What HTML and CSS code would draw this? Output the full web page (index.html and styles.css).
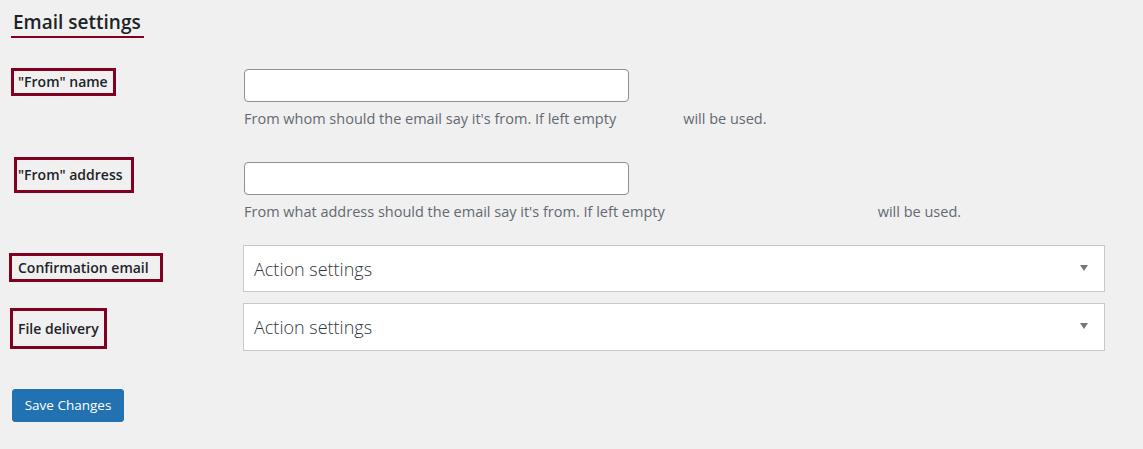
FILE: index.html
```html
<!DOCTYPE html>
<html lang="en">
<head>
<meta charset="utf-8">
<title>Email settings</title>
<link rel="stylesheet" href="styles.css">
</head>
<body>
<div class="wrap">
  <h2 class="title">Email settings</h2>

  <div class="row row-1">
    <div class="label-cell"><label class="mark mark-name" for="from-name">"From" name</label></div>
    <div class="field-cell">
      <input class="text-input input-1" id="from-name" type="text">
      <p class="description">From whom should the email say it's from. If left empty<span class="blank blank-1"></span>will be used.</p>
    </div>
  </div>

  <div class="row row-2">
    <div class="label-cell"><label class="mark mark-address" for="from-address">"From" address</label></div>
    <div class="field-cell">
      <input class="text-input input-2" id="from-address" type="text">
      <p class="description">From what address should the email say it's from. If left empty<span class="blank blank-2"></span>will be used.</p>
    </div>
  </div>

  <div class="row row-3">
    <div class="label-cell"><span class="mark mark-confirm">Confirmation email</span></div>
    <div class="field-cell">
      <div class="select"><span>Action settings</span><span class="caret"></span></div>
    </div>
  </div>

  <div class="row row-4">
    <div class="label-cell"><span class="mark mark-file">File delivery</span></div>
    <div class="field-cell">
      <div class="select"><span>Action settings</span><span class="caret"></span></div>
    </div>
  </div>

  <button class="button-primary" type="button">Save Changes</button>
</div>
</body>
</html>
```

FILE: styles.css
```css
* { box-sizing: border-box; }

body {
  margin: 0;
  background: #f0f0f1;
  font-family: "Open Sans", "Noto Sans", "Liberation Sans", sans-serif;
  color: #1d2327;
}

.wrap {
  padding: 0 38px 40px 11px;
}

.title {
  display: inline-block;
  margin: 0;
  padding: 10px 3px 2px 2px;
  font-size: 19px;
  line-height: 24px;
  font-weight: 600;
  color: #1d2327;
  border-bottom: 2px solid #800020;
}

.row {
  display: grid;
  grid-template-columns: 232px 862px;
  align-items: start;
}

.row-1 { margin-top: 30px; }
.row-2 { margin-top: 28px; }
.row-3 { margin-top: 23px; }
.row-4 { margin-top: 11px; }

.mark {
  display: inline-flex;
  align-items: center;
  border: 3px solid #800020;
  font-size: 14px;
  font-weight: 600;
  line-height: 22px;
  color: #1d2327;
  white-space: nowrap;
}

.mark-name { width: 105px; height: 28px; padding-left: 4px; }
.mark-address { width: 120px; height: 36px; padding-left: 1px; margin-left: 3px; }
.mark-confirm { width: 154px; height: 29px; padding-left: 6px; margin-left: -2px; margin-top: 8px; }
.mark-file { width: 97px; height: 41px; padding-left: 5px; margin-left: -1px; margin-top: 5px; }

.text-input {
  display: block;
  width: 385px;
  height: 33px;
  margin: 0 0 0 1px;
  border: 1px solid #8c8f94;
  border-radius: 4px;
  background: #fff;
}

.input-1 { margin-top: 1px; }
.input-2 { margin-top: 5px; }

.description {
  margin: 7px 0 0 1px;
  font-size: 14.5px;
  line-height: 20px;
  color: #646970;
}

.blank { display: inline-block; }
.blank-1 { width: 67px; }
.blank-2 { width: 213px; }

.select {
  display: flex;
  align-items: center;
  justify-content: space-between;
  height: 47px;
  padding: 0 16px 0 10px;
  background: #fff;
  border: 1px solid #c8c8c8;
  font-size: 18px;
  font-weight: 300;
  color: #32373c;
}

.row-4 .select { height: 48px; }

.caret {
  width: 0;
  height: 0;
  border-left: 4.5px solid transparent;
  border-right: 4.5px solid transparent;
  border-top: 6px solid #777;
  margin-top: -2px;
}

.button-primary {
  display: block;
  margin: 38px 0 0 1px;
  width: 112px;
  height: 33px;
  padding: 0;
  background: #2271b1;
  border: 1px solid #2271b1;
  border-radius: 3px;
  color: #fff;
  font-family: inherit;
  font-size: 13.5px;
  line-height: 31px;
  text-align: center;
}
```
